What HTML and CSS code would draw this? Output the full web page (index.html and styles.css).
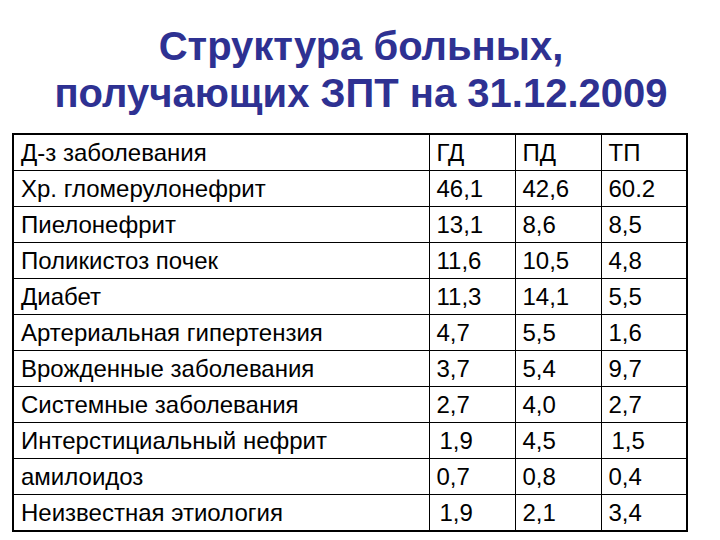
FILE: index.html
```html
<!DOCTYPE html>
<html lang="ru">
<head>
<meta charset="utf-8">
<title>Структура больных</title>
<link rel="stylesheet" href="styles.css">
</head>
<body>
<div class="slide">
  <h1 class="title">Структура больных,<br>получающих ЗПТ на 31.12.2009</h1>
  <table class="data">
    <colgroup>
      <col class="c-name"><col class="c-num"><col class="c-num"><col class="c-num">
    </colgroup>
    <tbody>
      <tr><td>Д-з заболевания</td><td>ГД</td><td>ПД</td><td>ТП</td></tr>
      <tr><td>Хр. гломерулонефрит</td><td>46,1</td><td>42,6</td><td>60.2</td></tr>
      <tr><td>Пиелонефрит</td><td>13,1</td><td>8,6</td><td>8,5</td></tr>
      <tr><td>Поликистоз почек</td><td>11,6</td><td>10,5</td><td>4,8</td></tr>
      <tr><td>Диабет</td><td>11,3</td><td>14,1</td><td>5,5</td></tr>
      <tr><td>Артериальная гипертензия</td><td>4,7</td><td>5,5</td><td>1,6</td></tr>
      <tr><td>Врожденные заболевания</td><td>3,7</td><td>5,4</td><td>9,7</td></tr>
      <tr><td>Системные заболевания</td><td>2,7</td><td>4,0</td><td>2,7</td></tr>
      <tr><td>Интерстициальный нефрит</td><td><span class="nudge">1,9</span></td><td>4,5</td><td><span class="nudge">1,5</span></td></tr>
      <tr><td>амилоидоз</td><td>0,7</td><td>0,8</td><td>0,4</td></tr>
      <tr><td>Неизвестная этиология</td><td><span class="nudge">1,9</span></td><td>2,1</td><td>3,4</td></tr>
    </tbody>
  </table>
</div>
</body>
</html>
```
FILE: styles.css
```css
html, body {
  margin: 0;
  padding: 0;
  background: #ffffff;
}
.slide {
  width: 720px;
  height: 540px;
  overflow: hidden;
  padding-top: 23px;
  box-sizing: border-box;
  font-family: "Liberation Sans", Arial, sans-serif;
}
.title {
  margin: 0 0 16px 2px;
  font-size: 40px;
  line-height: 47px;
  font-weight: bold;
  text-align: center;
  color: #2e3192;
}
.data {
  margin-left: 12px;
  width: 674px;
  border-collapse: collapse;
  border: 2px solid #000;
  table-layout: fixed;
  color: #000;
}
.c-name { width: 416px; }
.c-num { width: 86px; }
.data td {
  height: 35px;
  padding: 0 0 0 7px;
  border: 1px solid #000;
  font-size: 24px;
  line-height: 28px;
  white-space: nowrap;
  vertical-align: middle;
}
.nudge {
  padding-left: 3px;
}
```
